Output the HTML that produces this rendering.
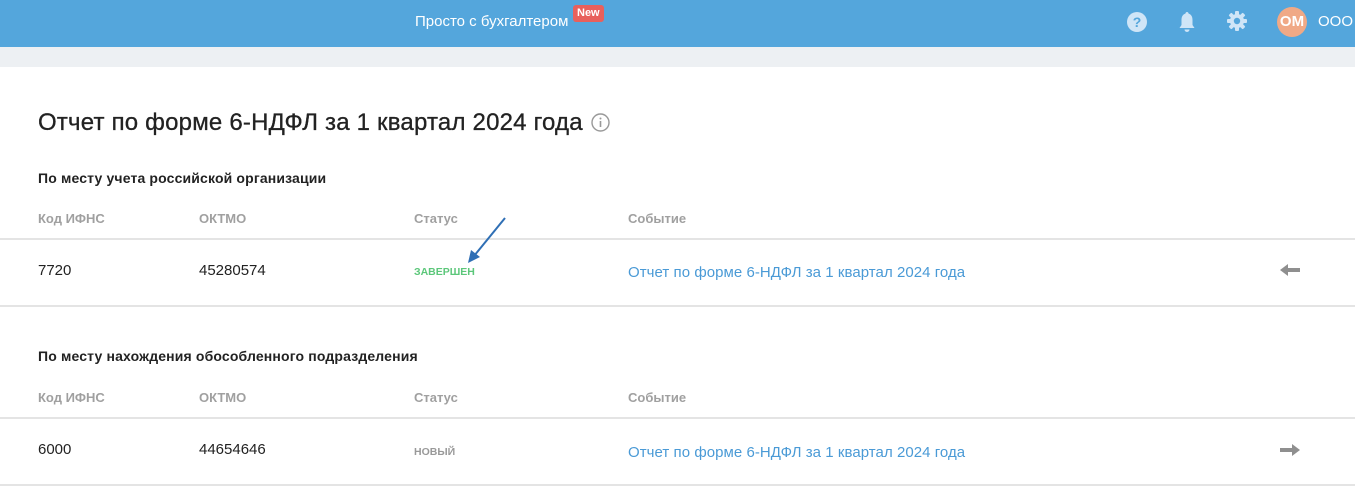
<!DOCTYPE html>
<html><head><meta charset="utf-8"><style>
*{margin:0;padding:0;box-sizing:border-box}
body{width:1355px;height:499px;overflow:hidden;background:#fff;font-family:"Liberation Sans",Arial,sans-serif;position:relative;color:#222}
.hdr{position:absolute;left:0;top:0;width:1355px;height:47px;background:#54a6dc}
.band{position:absolute;left:0;top:47px;width:1355px;height:20px;background:#edf0f3}
.a{position:absolute;white-space:nowrap}
.th{font-size:13px;color:#a0a0a0;font-weight:bold}
.td{font-size:15px;color:#222}
.ln{position:absolute;left:0;width:1355px;height:2px;background:#e4e4e4}
.link{font-size:15px;color:#4a9ad6;letter-spacing:.05px}
</style></head><body>
<div class="hdr"></div>
<div class="a" style="left:415px;top:13px;font-size:15px;color:#fff">Просто с бухгалтером</div>
<div class="a" style="left:573px;top:5px;background:#e8605c;color:#fff;font-size:11px;font-weight:bold;padding:2px 4px;border-radius:3px;line-height:13px">New</div>
<svg class="a" style="left:1126px;top:11px" width="22" height="22" viewBox="0 0 22 22"><circle cx="11" cy="11" r="10" fill="#cfe5f7"/><text x="11" y="16" text-anchor="middle" font-family="Liberation Sans" font-weight="bold" font-size="14" fill="#54a6dc">?</text></svg>
<svg class="a" style="left:1177px;top:11px" width="20" height="22" viewBox="0 0 20 22"><path d="M10 1c-1 0-1.5.8-1.5 1.5C5.5 3.5 4.5 6 4.5 9v5L2.5 17h15l-2-3V9c0-3-1-5.5-4-6.5C11.5 1.8 11 1 10 1z" fill="#cfe5f7"/><path d="M7.5 18.5a2.5 2.5 0 0 0 5 0z" fill="#cfe5f7"/></svg>
<svg class="a" style="left:1226px;top:10px" width="22" height="22" viewBox="0 0 22 22"><g fill="#cfe5f7"><circle cx="11" cy="11" r="7"/><rect x="9" y="1" width="4" height="20" rx="1"/><rect x="1" y="9" width="20" height="4" rx="1"/><rect x="9" y="1" width="4" height="20" rx="1" transform="rotate(45 11 11)"/><rect x="9" y="1" width="4" height="20" rx="1" transform="rotate(-45 11 11)"/></g><circle cx="11" cy="11" r="3.2" fill="#54a6dc"/></svg>
<div class="a" style="left:1277px;top:7px;width:30px;height:30px;border-radius:50%;background:#f0a986;color:#fff;font-weight:bold;font-size:15px;line-height:30px;text-align:center">ОМ</div>
<div class="a" style="left:1318px;top:13px;font-size:15px;color:#fff">ООО "</div>
<div class="band"></div>
<div class="a" style="left:38px;top:109px;font-size:24px;color:#222;letter-spacing:.2px;-webkit-text-stroke:.3px #222">Отчет по форме 6-НДФЛ за 1 квартал 2024 года</div>
<svg class="a" style="left:591px;top:113px" width="19" height="19" viewBox="0 0 19 19"><circle cx="9.5" cy="9.5" r="8.5" fill="none" stroke="#999" stroke-width="1.4"/><rect x="8.7" y="8" width="1.6" height="6" fill="#999"/><circle cx="9.5" cy="5.5" r="1" fill="#999"/></svg>
<div class="a" style="left:38px;top:170px;font-size:14px;font-weight:bold;letter-spacing:.15px">По месту учета российской организации</div>
<div class="a th" style="left:38px;top:211px">Код ИФНС</div>
<div class="a th" style="left:199px;top:211px">ОКТМО</div>
<div class="a th" style="left:414px;top:211px">Статус</div>
<div class="a th" style="left:628px;top:211px">Событие</div>
<div class="ln" style="top:238px"></div>
<div class="a td" style="left:38px;top:262px">7720</div>
<div class="a td" style="left:199px;top:262px">45280574</div>
<div class="a" style="left:414px;top:266px;font-size:10.5px;font-weight:bold;color:#5cc77a">ЗАВЕРШЕН</div>
<div class="a link" style="left:628px;top:264px">Отчет по форме 6-НДФЛ за 1 квартал 2024 года</div>
<svg class="a" style="left:1279px;top:263px" width="22" height="14" viewBox="0 0 22 14"><path d="M1 7L9 1v4h12v4H9v4z" fill="#8f8f8f"/></svg>
<svg class="a" style="left:466px;top:216px" width="42" height="48" viewBox="0 0 42 48"><path d="M39 2L8 40" stroke="#2f6fb5" stroke-width="2"/><path d="M2 47l3-13 9 7z" fill="#2f6fb5"/></svg>
<div class="ln" style="top:305px"></div>
<div class="a" style="left:38px;top:348px;font-size:14px;font-weight:bold;letter-spacing:.15px">По месту нахождения обособленного подразделения</div>
<div class="a th" style="left:38px;top:390px">Код ИФНС</div>
<div class="a th" style="left:199px;top:390px">ОКТМО</div>
<div class="a th" style="left:414px;top:390px">Статус</div>
<div class="a th" style="left:628px;top:390px">Событие</div>
<div class="ln" style="top:417px"></div>
<div class="a td" style="left:38px;top:441px">6000</div>
<div class="a td" style="left:199px;top:441px">44654646</div>
<div class="a" style="left:414px;top:446px;font-size:10.5px;font-weight:bold;color:#999">НОВЫЙ</div>
<div class="a link" style="left:628px;top:444px">Отчет по форме 6-НДФЛ за 1 квартал 2024 года</div>
<svg class="a" style="left:1279px;top:443px" width="22" height="14" viewBox="0 0 22 14"><path d="M21 7L13 1v4H1v4h12v4z" fill="#8f8f8f"/></svg>
<div class="ln" style="top:484px"></div>
</body></html>
